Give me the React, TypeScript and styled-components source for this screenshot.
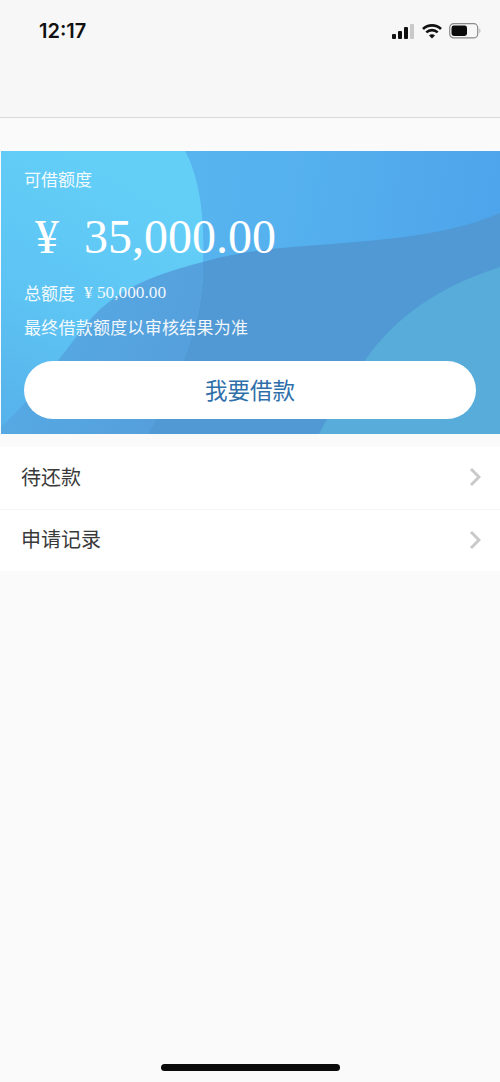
import React from 'react';
import styled, { createGlobalStyle } from 'styled-components';

const GlobalStyle = createGlobalStyle`
  html, body {
    margin: 0;
    padding: 0;
    background: #fafafa;
  }
  * {
    box-sizing: border-box;
  }
`;

const CJK = `"Noto Sans CJK SC", "Noto Sans", sans-serif`;
const SERIF = `"Liberation Serif", "Noto Sans CJK SC", serif`;

const Page = styled.div`
  width: 500px;
  height: 1082px;
  display: flex;
  flex-direction: column;
  overflow: hidden;
  background: #fafafa;
  font-family: ${CJK};
`;

const Header = styled.header`
  height: 118px;
  padding: 20px 19px 0 39px;
  background: #f7f7f7;
  border-bottom: 1px solid #d9d9d9;
`;

const StatusBar = styled.div`
  display: flex;
  justify-content: space-between;
  align-items: center;
  height: 22px;
`;

const Time = styled.span`
  font-family: Inter, "Liberation Sans", sans-serif;
  font-size: 20px;
  font-weight: 600;
  color: #111;
`;

const StatusIcons = styled.div`
  display: flex;
  align-items: center;
  gap: 7px;
`;

const Card = styled.section`
  position: relative;
  height: 283px;
  margin: 33px 0 13px 1px;
  padding: 18px 24px 15px 23px;
  overflow: hidden;
  color: #fff;
  background: linear-gradient(100deg, #58b8ef 0%, #56b2ee 50%, #4da2ea 100%);
`;

const CardShapes = styled.svg`
  position: absolute;
  inset: 0;
  width: 100%;
  height: 100%;
`;

const CardBody = styled.div`
  position: relative;
  display: flex;
  flex-direction: column;
  height: 100%;
`;

const Label = styled.div`
  font-size: 17px;
  line-height: 20px;
  opacity: 0.92;
`;

const Amount = styled.div`
  display: flex;
  align-items: center;
  gap: 25px;
  height: 60px;
  margin: 18px 0 0 11px;
  font-family: ${SERIF};
  font-size: 48px;
  line-height: 60px;
`;

const Total = styled.div`
  display: flex;
  align-items: center;
  gap: 9px;
  margin-top: 16px;
  font-size: 17px;
  line-height: 20px;
  opacity: 0.92;
`;

const TotalValue = styled.span`
  font-family: ${SERIF};
  font-size: 17.3px;
`;

const Notice = styled(Label)`
  margin-top: 14px;
  letter-spacing: 0.25px;
`;

const BorrowButton = styled.button`
  width: 452px;
  height: 58px;
  margin-top: 24px;
  padding: 0 0 3px;
  border: 0;
  border-radius: 29px;
  background: #fff;
  color: #2f70aa;
  font-family: ${CJK};
  font-size: 22.5px;
`;

const List = styled.ul`
  margin: 0;
  padding: 0;
  list-style: none;
  background: #fff;
`;

const Row = styled.li`
  display: flex;
  justify-content: space-between;
  align-items: center;
  height: 62px;
  padding: 0 19px 0 21px;
  font-size: 20px;
  color: #3a3a3a;

  & + & {
    border-top: 1px solid #f6f6f6;
  }
`;

const RowLabel = styled.span`
  margin-top: -4px;
`;

const RowArrow = styled.svg`
  margin-top: -2px;
`;

const HomeBar = styled.div`
  width: 179px;
  height: 7px;
  margin: auto auto 11px;
  border-radius: 4px;
  background: #0a0a0a;
`;

const Signal = () => (
  <svg width="23" height="16" viewBox="0 0 23 16">
    <rect x="0" y="11" width="4" height="5" rx="1" fill="#111" />
    <rect x="6" y="8" width="4" height="8" rx="1" fill="#111" />
    <rect x="12" y="4" width="4" height="12" rx="1" fill="#111" />
    <rect x="18" y="1" width="4" height="15" rx="1" fill="#c9c9c9" />
  </svg>
);

const Wifi = () => (
  <svg width="20" height="15" viewBox="0 0 20 15" fill="none" stroke="#111" strokeWidth="2.6">
    <path d="M1 5 C6 0.2 14 0.2 19 5" />
    <path d="M4.3 8.4 C7.6 5.4 12.4 5.4 15.7 8.4" />
    <path d="M10 14.6 L7 11.4 C8.8 10 11.2 10 13 11.4 Z" fill="#111" stroke="none" />
  </svg>
);

const Battery = () => (
  <svg width="32" height="16" viewBox="0 0 32 16">
    <rect x="0.7" y="0.7" width="28" height="14.2" rx="4" fill="none" stroke="#8a8a8a" strokeWidth="1.2" />
    <rect x="2.5" y="2.5" width="15.5" height="10.5" rx="2.4" fill="#0c0c0c" />
    <path d="M30.5 5.5 C31.6 6 31.6 9.6 30.5 10 Z" fill="#9a9a9a" />
  </svg>
);

const Chevron = () => (
  <RowArrow width="12" height="20" viewBox="0 0 12 20" fill="none">
    <path d="M2 2 L10 10 L2 18" stroke="#c9c9c9" strokeWidth="3" />
  </RowArrow>
);

const rows = ['待还款', '申请记录'];

const App = () => (
  <Page>
    <GlobalStyle />
    <Header>
      <StatusBar>
        <Time>12:17</Time>
        <StatusIcons>
          <Signal />
          <Wifi />
          <Battery />
        </StatusIcons>
      </StatusBar>
    </Header>
    <Card>
      <CardShapes viewBox="0 0 499 283" preserveAspectRatio="none">
        <defs>
          <linearGradient id="lightCorner" x1="0.4" y1="0" x2="0" y2="1">
            <stop offset="0" stopColor="#63cff7" />
            <stop offset="0.55" stopColor="#5dc3f3" />
            <stop offset="1" stopColor="#56b0ea" />
          </linearGradient>
          <linearGradient id="lowerWave" x1="0" y1="0" x2="1" y2="0.4">
            <stop offset="0" stopColor="#56aee6" />
            <stop offset="1" stopColor="#559fdc" />
          </linearGradient>
        </defs>
        {/* light corner top left */}
        <path d="M-1 0 L184 0 C198 25 204 65 202 111 C204 170 175 235 147 283 L-1 283 Z" fill="url(#lightCorner)" />
        {/* lower wave, left of the big curve */}
        <path
          d="M202 111 C160 122 118 135 88 170 C55 210 30 250 -1 277 L-1 283 L147 283 C175 235 204 170 202 111 Z"
          fill="url(#lowerWave)"
        />
        {/* middle band right of the big curve */}
        <path
          d="M499 62 C440 88 360 90 280 97 C250 100 226 104 202 111 C204 170 175 235 147 283 L499 283 Z"
          fill="#5199d4"
        />
        {/* teal corner */}
        <path d="M499 116 C440 135 395 165 365 208 C345 235 330 260 318 283 L499 283 Z" fill="#57acda" />
      </CardShapes>
      <CardBody>
        <Label>可借额度</Label>
        <Amount>
          <span>¥</span>
          <span>35,000.00</span>
        </Amount>
        <Total>
          <span>总额度</span>
          <TotalValue>¥ 50,000.00</TotalValue>
        </Total>
        <Notice>最终借款额度以审核结果为准</Notice>
        <BorrowButton>我要借款</BorrowButton>
      </CardBody>
    </Card>
    <List>
      {rows.map((row) => (
        <Row key={row}>
          <RowLabel>{row}</RowLabel>
          <Chevron />
        </Row>
      ))}
    </List>
    <HomeBar />
  </Page>
);

export default App;
